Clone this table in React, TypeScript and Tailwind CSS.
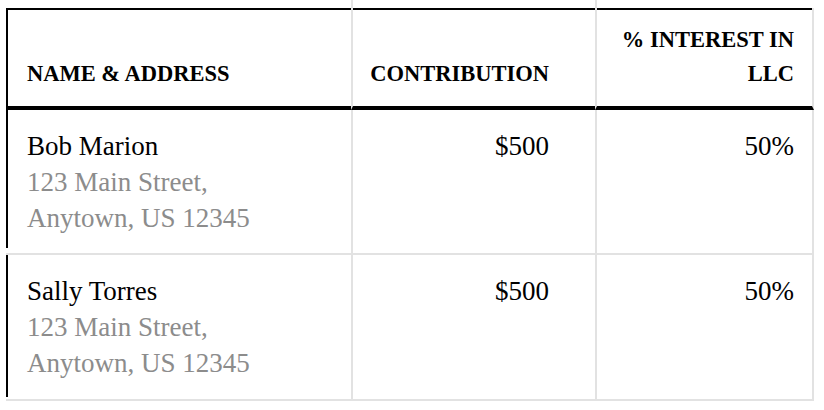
import React from 'react';

const MEMBERS = [
  { name: 'Bob Marion', street: '123 Main Street,', city: 'Anytown, US 12345', contribution: '$500', interest: '50%', inner: 'pb-[12px]', gap: 'pb-[5px]' },
  { name: 'Sally Torres', street: '123 Main Street,', city: 'Anytown, US 12345', contribution: '$500', interest: '50%', inner: 'pb-[16px]', gap: 'pb-[2px]' },
];

export default function App() {
  return (
    <div className="min-h-[410px] bg-white pl-[6px] font-['Liberation_Serif',serif] text-black">
      <table className="table-fixed border-separate border-spacing-0">
        <colgroup>
          <col className="w-[345px]" />
          <col className="w-[244px]" />
          <col className="w-[219px]" />
        </colgroup>
        <thead>
          {/* dividers run up past the top rule */}
          <tr className="h-[8px]">
            <td className="p-0" />
            <td className="border-l-2 border-[#e2e2e2] p-0" />
            <td className="border-l-2 border-[#e2e2e2] p-0" />
          </tr>
          <tr className="align-bottom text-[22.5px] font-bold uppercase leading-[34px]">
            <th className="border-b-4 border-l-2 border-black pt-[15px] pb-[15px] pl-[19px] text-left font-bold shadow-[inset_0_2px_0_#000]">
              Name &amp; Address
            </th>
            <th className="border-b-4 border-l-2 border-b-black border-l-[#e2e2e2] pt-[15px] pb-[15px] pr-[46px] text-right font-bold shadow-[inset_0_2px_0_#000]">
              Contribution
            </th>
            <th className="border-x-2 border-b-4 border-x-[#e2e2e2] border-b-black pt-[15px] pb-[15px] pr-[18px] pl-4 text-right font-bold shadow-[inset_0_2px_0_#000]">
              % Interest in LLC
            </th>
          </tr>
        </thead>
        <tbody className="text-[27px] leading-[36px]">
          {MEMBERS.map((m) => (
            <tr key={m.name} className="align-top">
              <td className={`border-b-2 border-[#e2e2e2] p-0 ${m.gap}`}>
                <div className={`border-l-2 border-black pt-[18px] pl-[19px] ${m.inner}`}>
                  <div>{m.name}</div>
                  <div className="text-[#8c8c8c]">{m.street}</div>
                  <div className="text-[#8c8c8c]">{m.city}</div>
                </div>
              </td>
              <td className="border-b-2 border-l-2 border-[#e2e2e2] pt-[18px] pr-[46px] text-right">
                {m.contribution}
              </td>
              <td className="border-x-2 border-b-2 border-[#e2e2e2] pt-[18px] pr-[18px] text-right">
                {m.interest}
              </td>
            </tr>
          ))}
        </tbody>
      </table>
    </div>
  );
}
